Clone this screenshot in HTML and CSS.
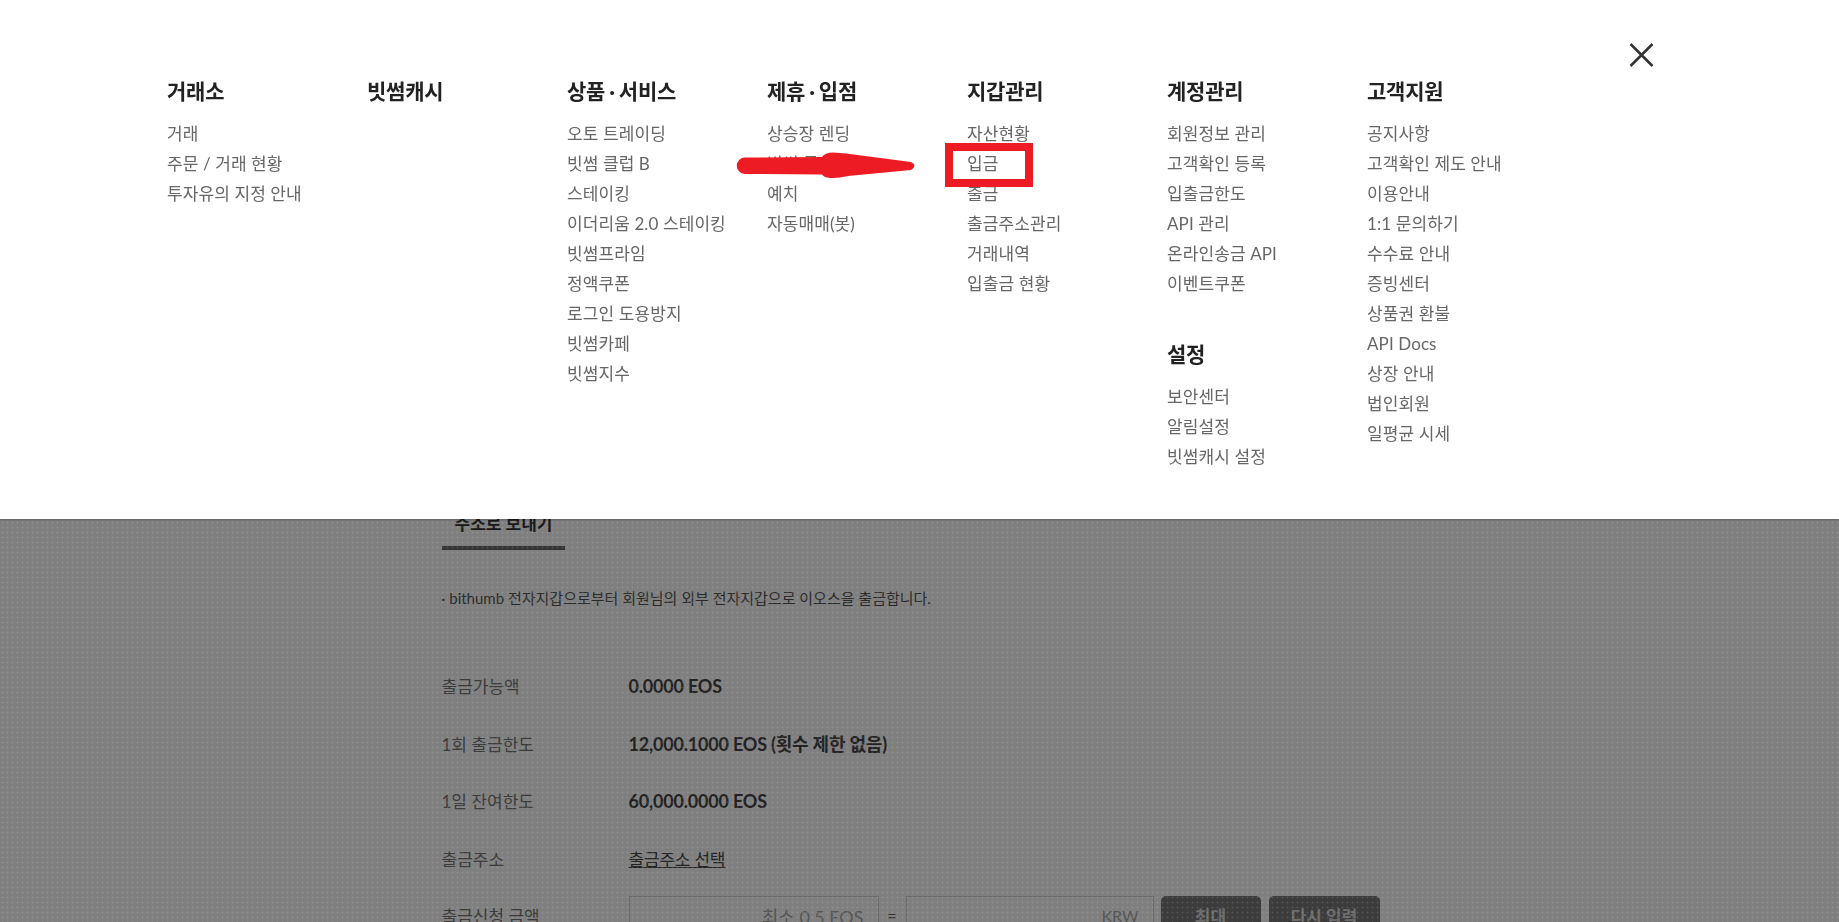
FILE: index.html
```html
<!DOCTYPE html>
<html lang="ko">
<head>
    <meta charset="UTF-8">
    <meta name="viewport" content="width=device-width, initial-scale=1.0">
    <title>빗썸 - 출금</title>
    <link rel="stylesheet" href="styles.css">
</head>
<body>
    <div class="page">
        <div class="wrap">
            <div class="tabs">
                <span class="tab tab-on">주소로 보내기</span>
            </div>
            <p class="notice">· bithumb 전자지갑으로부터 회원님의 외부 전자지갑으로 이오스을 출금합니다.</p>
            <div class="info">
                <div class="row">
                    <div class="label">출금가능액</div>
                    <div class="value">0.0000 EOS</div>
                </div>
                <div class="row">
                    <div class="label">1회 출금한도</div>
                    <div class="value">12,000.1000 EOS (횟수 제한 없음)</div>
                </div>
                <div class="row">
                    <div class="label">1일 잔여한도</div>
                    <div class="value">60,000.0000 EOS</div>
                </div>
                <div class="row">
                    <div class="label">출금주소</div>
                    <div class="value"><a class="link" href="#">출금주소 선택</a></div>
                </div>
                <div class="row">
                    <div class="label">출금신청 금액</div>
                    <div class="form">
                        <div class="field field-coin">최소 0.5 EOS</div>
                        <span class="eq">=</span>
                        <div class="field field-krw">KRW</div>
                        <button class="btn btn-max">최대</button>
                        <button class="btn btn-reset">다시 입력</button>
                    </div>
                </div>
            </div>
        </div>
    </div>

    <div class="dim"></div>

    <div class="gnb">
        <div class="gnb-cols">
            <div class="gnb-col">
                <h3>거래소</h3>
                <ul>
                    <li>거래</li>
                    <li>주문 / 거래 현황</li>
                    <li>투자유의 지정 안내</li>
                </ul>
            </div>
            <div class="gnb-col">
                <h3>빗썸캐시</h3>
            </div>
            <div class="gnb-col">
                <h3>상품<span class="dot">·</span>서비스</h3>
                <ul>
                    <li>오토 트레이딩</li>
                    <li>빗썸 클럽 B</li>
                    <li>스테이킹</li>
                    <li>이더리움 2.0 스테이킹</li>
                    <li>빗썸프라임</li>
                    <li>정액쿠폰</li>
                    <li>로그인 도용방지</li>
                    <li>빗썸카페</li>
                    <li>빗썸지수</li>
                </ul>
            </div>
            <div class="gnb-col">
                <h3>제휴<span class="dot">·</span>입점</h3>
                <ul>
                    <li>상승장 렌딩</li>
                    <li>빗썸 론 신청</li>
                    <li>예치</li>
                    <li>자동매매(봇)</li>
                </ul>
            </div>
            <div class="gnb-col">
                <h3>지갑관리</h3>
                <ul>
                    <li>자산현황</li>
                    <li class="marked">입금</li>
                    <li>출금</li>
                    <li>출금주소관리</li>
                    <li>거래내역</li>
                    <li>입출금 현황</li>
                </ul>
            </div>
            <div class="gnb-col">
                <h3>계정관리</h3>
                <ul>
                    <li>회원정보 관리</li>
                    <li>고객확인 등록</li>
                    <li>입출금한도</li>
                    <li>API 관리</li>
                    <li>온라인송금 API</li>
                    <li>이벤트쿠폰</li>
                </ul>
                <h3 class="sub-title">설정</h3>
                <ul>
                    <li>보안센터</li>
                    <li>알림설정</li>
                    <li>빗썸캐시 설정</li>
                </ul>
            </div>
            <div class="gnb-col">
                <h3>고객지원</h3>
                <ul>
                    <li>공지사항</li>
                    <li>고객확인 제도 안내</li>
                    <li>이용안내</li>
                    <li>1:1 문의하기</li>
                    <li>수수료 안내</li>
                    <li>증빙센터</li>
                    <li>상품권 환불</li>
                    <li>API Docs</li>
                    <li>상장 안내</li>
                    <li>법인회원</li>
                    <li>일평균 시세</li>
                </ul>
            </div>
        </div>

        <button class="gnb-close" aria-label="닫기">
            <svg width="25" height="24" viewBox="0 0 25 24">
                <path d="M1.5 1 L23.5 23 M23.5 1 L1.5 23" stroke="#333" stroke-width="2.6" fill="none"/>
            </svg>
        </button>

        <!-- 표시용 화살표 -->
        <svg class="mark-arrow" width="1839" height="519" viewBox="0 0 1839 519">
            <path d="M745 157.5 L822 157 Q825 152.5 833 152.5 L846 153.5 L911 162 Q918 165.5 911 170 L848 176 Q838 178.5 830 178 Q824 177.5 822 174.5 L745 174 A8.25 8.25 0 0 1 745 157.5 Z" fill="#ed1c24"/>
        </svg>
    </div>
</body>
</html>
```

FILE: styles.css
```css
html, body {
    margin: 0;
    height: 100%;
    overflow: hidden;
}

body {
    font-family: Lato, "Noto Sans CJK KR", sans-serif;
    background-color: #fff;
    color: #333;
}

/* 뒤쪽 출금 화면 */
.page {
    padding-top: 512px;
}

.wrap {
    width: 956px;
    margin: 0 auto;
}

.tabs {
    display: flex;
}

.tab {
    font-size: 17px;
    font-weight: bold;
    line-height: 24px;
    padding: 0 13px 10px;
    color: #333;
}

.tab-on {
    border-bottom: 4px solid #686868;
}

.notice {
    margin: 38px 0 0;
    font-size: 15px;
    line-height: 20px;
    color: #555;
}

.info {
    margin-top: 49px;
}

.row {
    display: grid;
    grid-template-columns: 187px 1fr;
    align-items: center;
    height: 57.5px;
}

.label {
    font-size: 17px;
    color: #777;
}

.value {
    font-size: 18px;
    font-weight: bold;
    color: #444;
    letter-spacing: -0.2px;
}

.link {
    color: #444;
    font-weight: normal;
    font-size: 17px;
    text-decoration: underline;
}

.form {
    display: flex;
    align-items: center;
}

.field {
    box-sizing: border-box;
    height: 40px;
    width: 250px;
    border: 1px solid #d4d4d4;
    padding: 0 14px;
    display: flex;
    align-items: center;
    justify-content: flex-end;
    font-size: 18px;
    color: #aaa;
}

.field-krw {
    width: 248px;
    font-size: 16px;
}

.eq {
    width: 27px;
    text-align: center;
    font-size: 16px;
    color: #666;
}

.btn {
    box-sizing: border-box;
    height: 40px;
    margin-left: 8px;
    border: 0;
    border-radius: 5px;
    background-color: #787878;
    color: #d8d8d8;
    font-family: Lato, "Noto Sans CJK KR", sans-serif;
    font-size: 17px;
    font-weight: bold;
}

.btn-max {
    width: 100px;
    margin-left: 7px;
}

.btn-reset {
    width: 111px;
}

/* 전체 메뉴 */
.dim {
    position: fixed;
    inset: 0;
    background-color: rgba(0, 0, 0, 0.5);
    background-image: radial-gradient(circle, rgba(255, 255, 255, 0.12) 0.8px, transparent 1.2px);
    background-size: 5px 5px;
}

.gnb {
    position: fixed;
    top: 0;
    left: 0;
    right: 0;
    height: 519px;
    background-color: #fff;
    box-shadow: 0 1px 2px rgba(0, 0, 0, 0.25);
}

.gnb-cols {
    display: grid;
    grid-template-columns: repeat(7, 200px);
    padding: 77px 0 0 167px;
}

.gnb-col h3 {
    margin: 0 0 14px;
    font-size: 21px;
    line-height: 28px;
    font-weight: bold;
    color: #222;
    letter-spacing: -0.2px;
}

.gnb-col h3 .dot {
    padding: 0 4px;
}

.gnb-col .sub-title {
    margin-top: 41px;
}

.gnb-col ul {
    list-style: none;
    margin: 0;
    padding: 0;
}

.gnb-col li {
    font-size: 17px;
    line-height: 30px;
    color: #666;
    letter-spacing: 0.1px;
}

.gnb-col li.marked {
    position: relative;
}

.gnb-col li.marked::after {
    content: "";
    position: absolute;
    left: -22px;
    top: -6px;
    width: 88px;
    height: 44px;
    box-sizing: border-box;
    border: 8px solid #ed1c24;
}

.gnb-close {
    position: absolute;
    top: 43px;
    right: 185px;
    width: 25px;
    height: 24px;
    padding: 0;
    border: 0;
    background: none;
    cursor: pointer;
}

.gnb-close svg {
    display: block;
}

.mark-arrow {
    position: absolute;
    top: 0;
    left: 0;
    pointer-events: none;
}
```
